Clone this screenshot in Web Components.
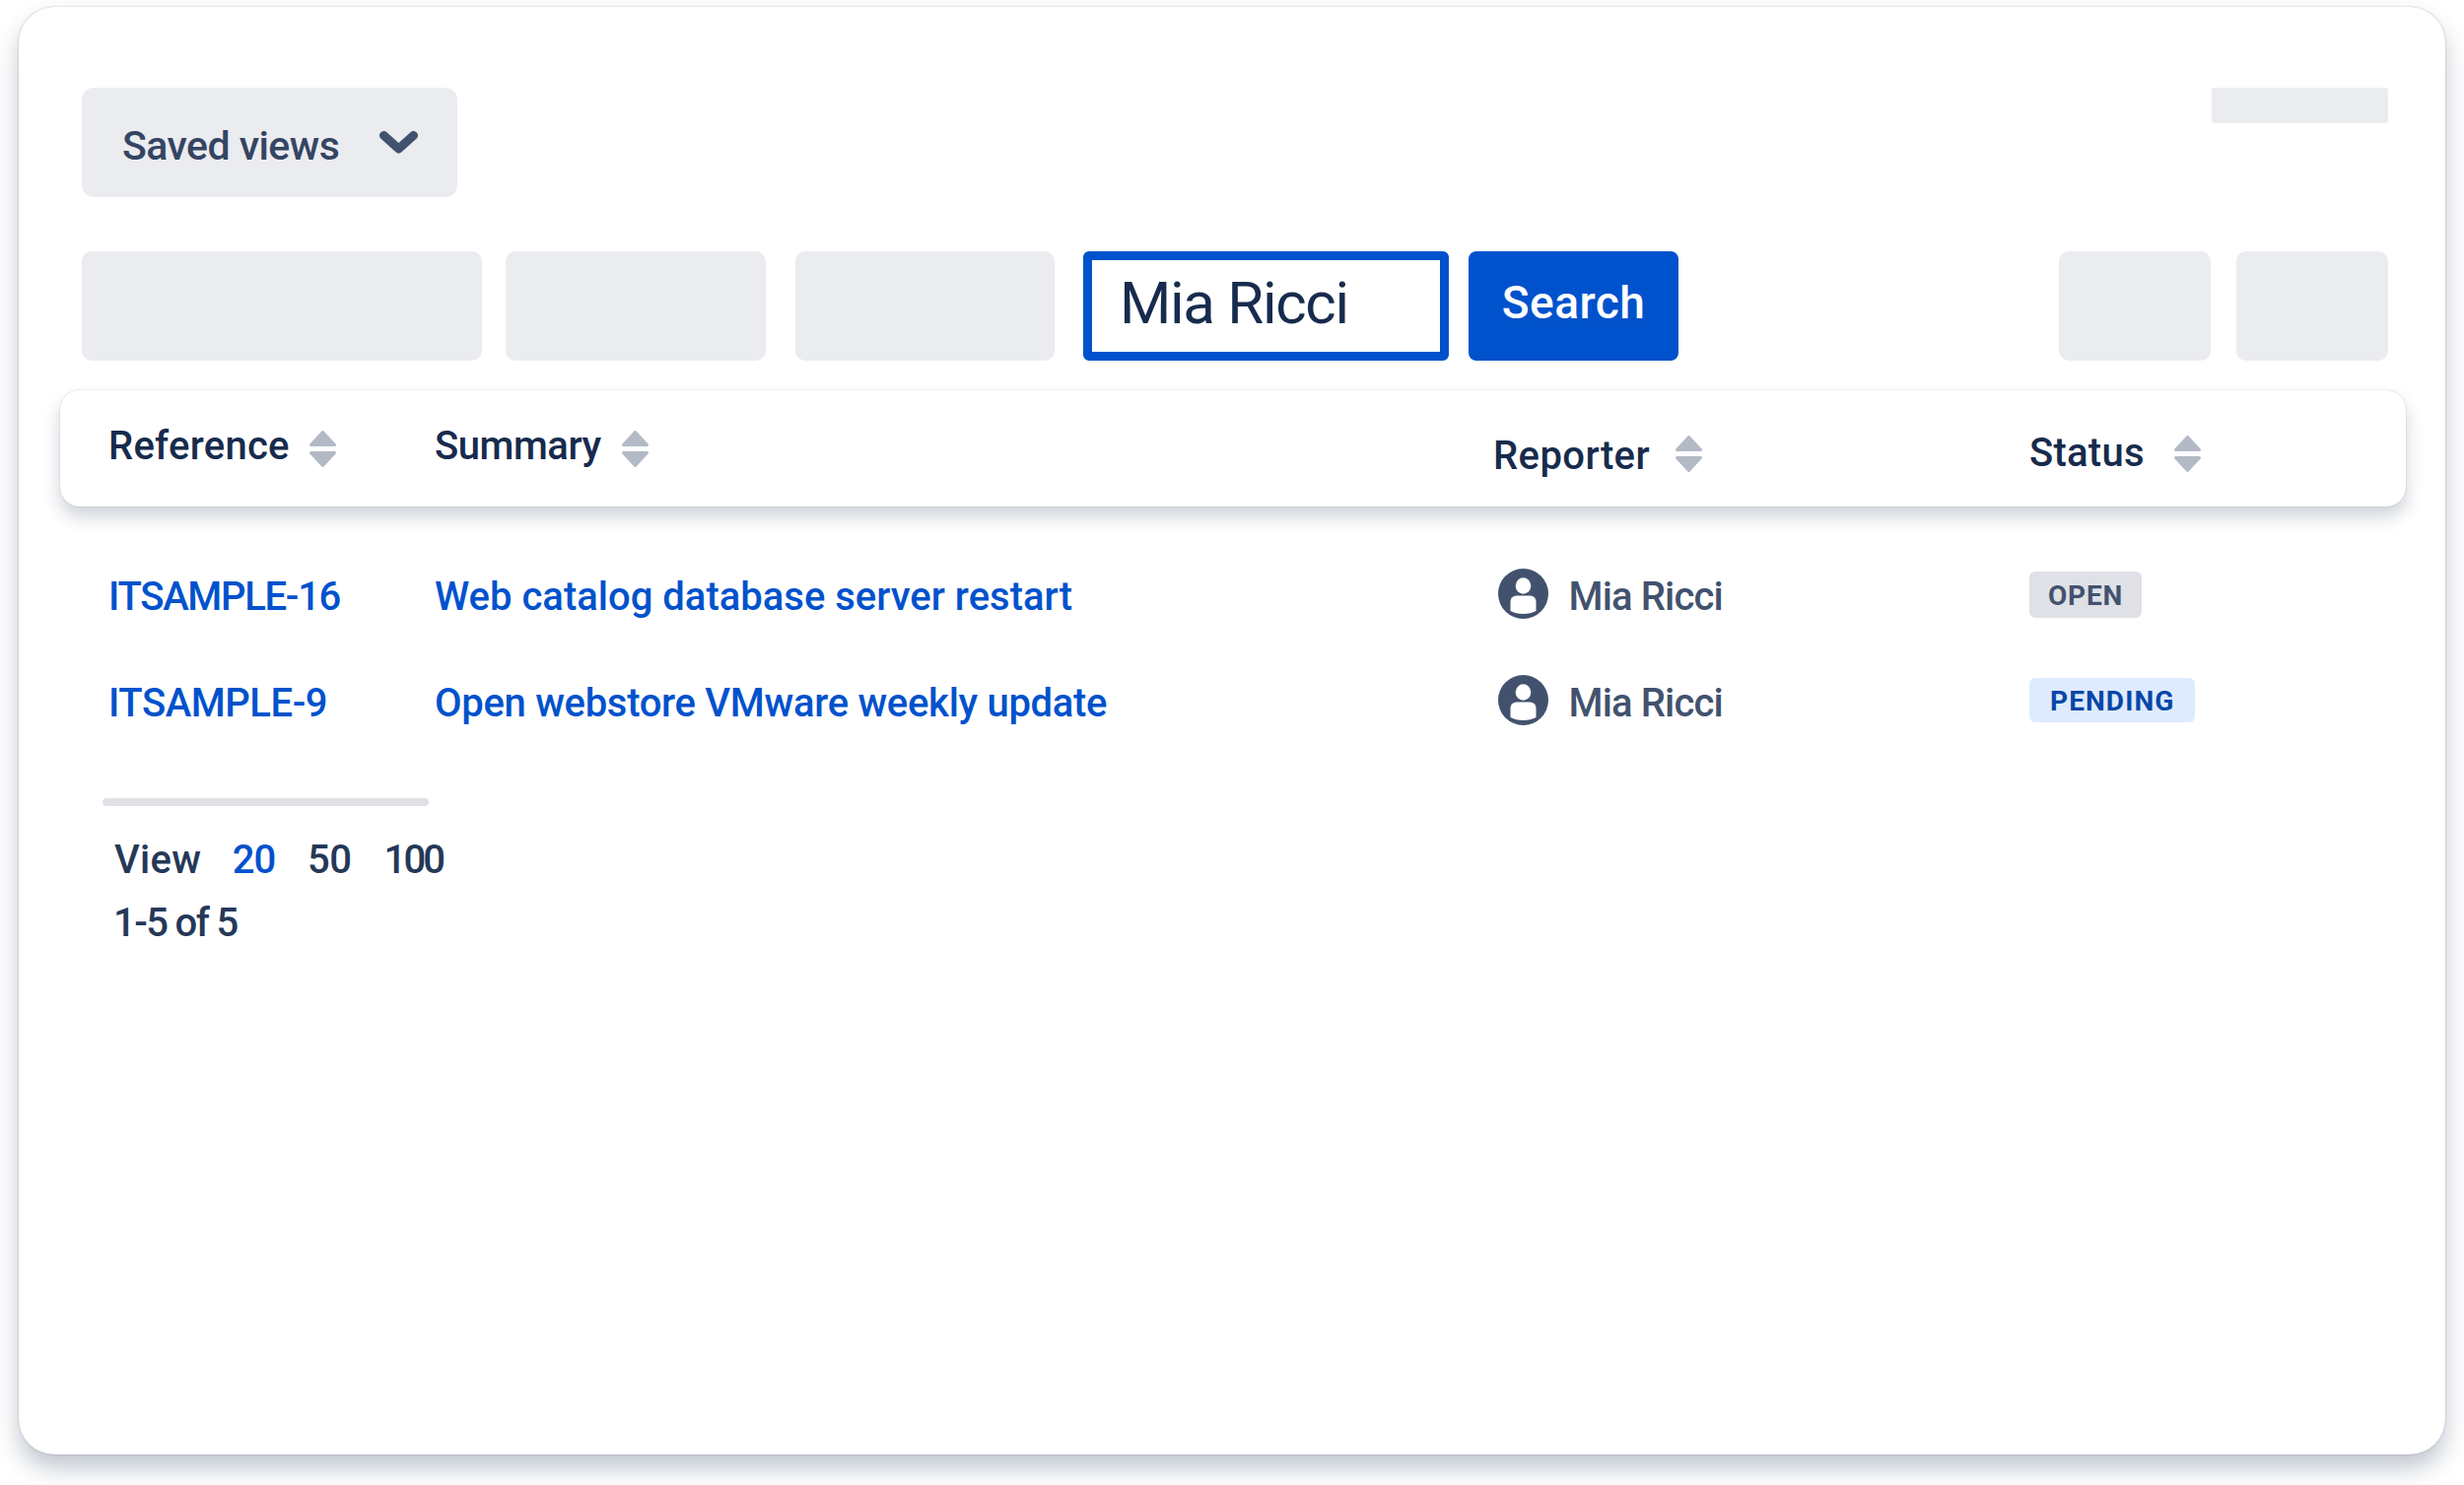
<!DOCTYPE html>
<html lang="en">
<head>
<meta charset="utf-8">
<title>Saved views</title>
<style>
	html, body { margin: 0; background: #fff; }
	body {
		width: 2500px;
		height: 1507px;
		overflow: hidden;
		padding: 7px 19px;
		box-sizing: border-box;
		font-family: Roboto, "Liberation Sans", sans-serif;
		color: #172b4d;
	}
</style>
</head>
<body>
<app-card>
	<div slot="top">
		<saved-views>Saved views</saved-views>
		<skel-box style="--w:179px;--h:36px;--r:3px"></skel-box>
	</div>
	<div slot="tools">
		<skel-box style="--w:406px"></skel-box>
		<skel-box style="--w:264px;margin-left:24px"></skel-box>
		<skel-box style="--w:263px;margin-left:30px"></skel-box>
		<search-box style="margin-left:29px">Mia Ricci</search-box>
		<search-button style="margin-left:20px">Search</search-button>
		<skel-box style="--w:154px;margin-left:auto"></skel-box>
		<skel-box style="--w:154px;margin-left:26px"></skel-box>
	</div>
	<issue-table>
		<sort-head slot="head" style="--pb:6px;--ls:.25px">Reference</sort-head>
		<sort-head slot="head" style="--pb:6px;--ls:-.45px;--gap:21px">Summary</sort-head>
		<sort-head slot="head" style="--pt:14px;--icon-pt:10px;--gap:26px;--ls:.4px">Reporter</sort-head>
		<sort-head slot="head" style="--pt:8px;--icon-pt:10px;--gap:30px;--ls:.25px">Status</sort-head>

		<issue-row>
			<a slot="key" style="letter-spacing:-1.3px">ITSAMPLE-16</a>
			<a slot="summary" style="letter-spacing:0">Web catalog database server restart</a>
			<person-cell slot="reporter">Mia Ricci</person-cell>
			<status-lozenge slot="status">OPEN</status-lozenge>
		</issue-row>
		<issue-row>
			<a slot="key" style="letter-spacing:-.45px">ITSAMPLE-9</a>
			<a slot="summary" style="letter-spacing:-.3px">Open webstore VMware weekly update</a>
			<person-cell slot="reporter">Mia Ricci</person-cell>
			<status-lozenge slot="status" kind="pending">PENDING</status-lozenge>
		</issue-row>
	</issue-table>
	<page-sizes></page-sizes>
</app-card>

<script>
;(function(customElements) {
	const BLUE = '#0052cc'
	const COLUMNS = '331px 1074px 544px 1fr'

	function define(name, html) {
		class Comp extends HTMLElement {
			constructor() {
				super()
				this.attachShadow({ mode: 'open' }).innerHTML = html
			}
		}
		customElements.define(name, Comp)
	}

	define('app-card', `
		<style>
			:host {
				display: block;
				box-sizing: border-box;
				width: 2462px;
				height: 1469px;
				padding: 82px 58px 0 64px;
				background: #fff;
				border-radius: 36px;
				box-shadow: 0 14px 24px rgba(9, 30, 66, .25), 0 0 1.5px rgba(9, 30, 66, .35);
			}
			::slotted([slot=top]) {
				display: flex;
				justify-content: space-between;
				align-items: flex-start;
				height: 111px;
			}
			::slotted([slot=tools]) {
				display: flex;
				height: 111px;
				margin-top: 55px;
			}
		</style>
		<slot name="top"></slot>
		<slot name="tools"></slot>
		<slot></slot>
	`)

	define('skel-box', `
		<style>
			:host {
				display: block;
				width: var(--w, 100px);
				height: var(--h, 111px);
				background: #ebecf0;
				border-radius: var(--r, 10px);
			}
		</style>
	`)

	define('saved-views', `
		<style>
			:host {
				display: flex;
				box-sizing: border-box;
				width: 381px;
				height: 111px;
				padding: 0 40px 0 41px;
				align-items: center;
				justify-content: space-between;
				background: #ebecf0;
				border-radius: 12px;
				color: #344563;
				font-size: 41px;
				font-weight: 500;
				letter-spacing: -.55px;
			}
			span { padding-top: 6px; }
			svg { display: block; }
		</style>
		<span><slot></slot></span>
		<svg width="39" height="23" viewBox="0 0 39 23" fill="none">
			<path d="M4.5 4.5 19.5 18 34.5 4.5" stroke="#42526e" stroke-width="9" stroke-linecap="round" stroke-linejoin="round"/>
		</svg>
	`)

	define('search-box', `
		<style>
			:host {
				display: flex;
				box-sizing: border-box;
				width: 371px;
				height: 111.5px;
				margin-top: -.5px;
				padding: 0 0 6px 28px;
				align-items: center;
				background: #fff;
				border: 9px solid ${BLUE};
				border-radius: 6px;
				color: #172b4d;
				font-size: 60px;
				font-weight: 450;
				letter-spacing: -1.3px;
			}
		</style>
		<slot></slot>
	`)

	define('search-button', `
		<style>
			:host {
				display: flex;
				box-sizing: border-box;
				width: 213px;
				height: 111.5px;
				margin-top: -.5px;
				padding-bottom: 6px;
				align-items: center;
				justify-content: center;
				background: ${BLUE};
				border-radius: 8px;
				color: #fff;
				font-size: 46px;
				font-weight: 500;
				letter-spacing: .5px;
			}
		</style>
		<span><slot></slot></span>
	`)

	define('sort-head', `
		<style>
			:host {
				display: inline-flex;
				align-items: center;
				gap: var(--gap, 20px);
				font-size: 40px;
				font-weight: 500;
				letter-spacing: var(--ls, 0);
				color: #172b4d;
			}
			span { padding: var(--pt, 0) 0 var(--pb, 0); }
			svg { display: block; padding-top: var(--icon-pt, 0); }
		</style>
		<span><slot></slot></span>
		<svg width="27" height="37" viewBox="0 0 27 37" fill="#b3bac5" stroke="#b3bac5" stroke-width="3" stroke-linejoin="round">
			<path d="M13.5 1.5 25.5 14.5H1.5Z"/>
			<path d="M13.5 35.5 25.5 22.5H1.5Z"/>
		</svg>
	`)

	define('issue-table', `
		<style>
			:host { display: block; margin: 30px -18px 0 -22px; }
			.head {
				display: grid;
				grid-template-columns: ${COLUMNS};
				box-sizing: border-box;
				height: 118px;
				padding-left: 49px;
				align-items: center;
				background: #fff;
				border-radius: 20px;
				box-shadow: 0 10px 18px rgba(9, 30, 66, .2), 0 0 1.5px rgba(9, 30, 66, .22);
			}
			.body { margin-top: 37px; }
		</style>
		<div class="head"><slot name="head"></slot></div>
		<div class="body"><slot></slot></div>
	`)

	define('issue-row', `
		<style>
			:host {
				display: grid;
				grid-template-columns: ${COLUMNS};
				box-sizing: border-box;
				height: 108px;
				padding-left: 49px;
				align-items: center;
				font-size: 40px;
				font-weight: 500;
			}
			::slotted(a) { color: ${BLUE}; }
		</style>
		<slot name="key"></slot>
		<slot name="summary"></slot>
		<slot name="reporter"></slot>
		<slot name="status"></slot>
	`)

	define('person-cell', `
		<style>
			:host {
				display: flex;
				align-items: center;
				gap: 20.5px;
				padding-left: 5px;
				font-size: 40px;
				font-weight: 500;
				letter-spacing: -.85px;
				color: #42526e;
			}
			svg { display: block; margin-bottom: 5px; }
		</style>
		<svg width="51" height="51" viewBox="0 0 51 51">
			<circle cx="25.5" cy="25.5" r="25.5" fill="#42526e"/>
			<ellipse cx="25.5" cy="17.5" rx="7.8" ry="8.2" fill="#fff"/>
			<path d="M18.5 27.5h14a6 6 0 0 1 6 6V43q-5.5 3-13 3t-13-3V33.5a6 6 0 0 1 6-6Z" fill="#fff"/>
		</svg>
		<span><slot></slot></span>
	`)

	define('status-lozenge', `
		<style>
			:host {
				display: inline-flex;
				justify-self: start;
				box-sizing: border-box;
				height: 47px;
				margin-bottom: 3px;
				padding: 2px 19px 0;
				align-items: center;
				background: #dfe1e6;
				border-radius: 6px;
				color: #42526e;
				font-size: 28px;
				font-weight: 700;
				letter-spacing: .8px;
			}
			:host([kind=pending]) {
				height: 45px;
				margin-bottom: 5px;
				padding: 2px 21px 0;
				background: #deebff;
				color: #0747a6;
				letter-spacing: 1.1px;
			}
		</style>
		<slot></slot>
	`)

	define('page-sizes', `
		<style>
			:host { display: block; color: #253858; font-size: 40px; font-weight: 500; letter-spacing: .25px; }
			.rule {
				width: 331px;
				height: 8px;
				margin: 43px 0 23px 21px;
				background: #dfe1e6;
				border-radius: 4px;
			}
			.line { display: flex; height: 62px; margin-left: 33px; align-items: center; }
			.line + .line { margin: 2px 0 0 32px; }
			.on { color: ${BLUE}; letter-spacing: -1px; }
			.num { letter-spacing: -.5px; }
			.hundred { letter-spacing: -2.9px; }
			.range { letter-spacing: -1.6px; }
			.line span:nth-child(2) { margin-left: 31.5px; }
			.line span:nth-child(3) { margin-left: 33px; }
			.line span:nth-child(4) { margin-left: 33px; }
		</style>
		<div class="rule"></div>
		<div class="line"><span>View</span><span class="on">20</span><span class="num">50</span><span class="hundred">100</span></div>
		<div class="line"><span class="range">1-5 of 5</span></div>
	`)
})(customElements)
</script>
</body>
</html>
